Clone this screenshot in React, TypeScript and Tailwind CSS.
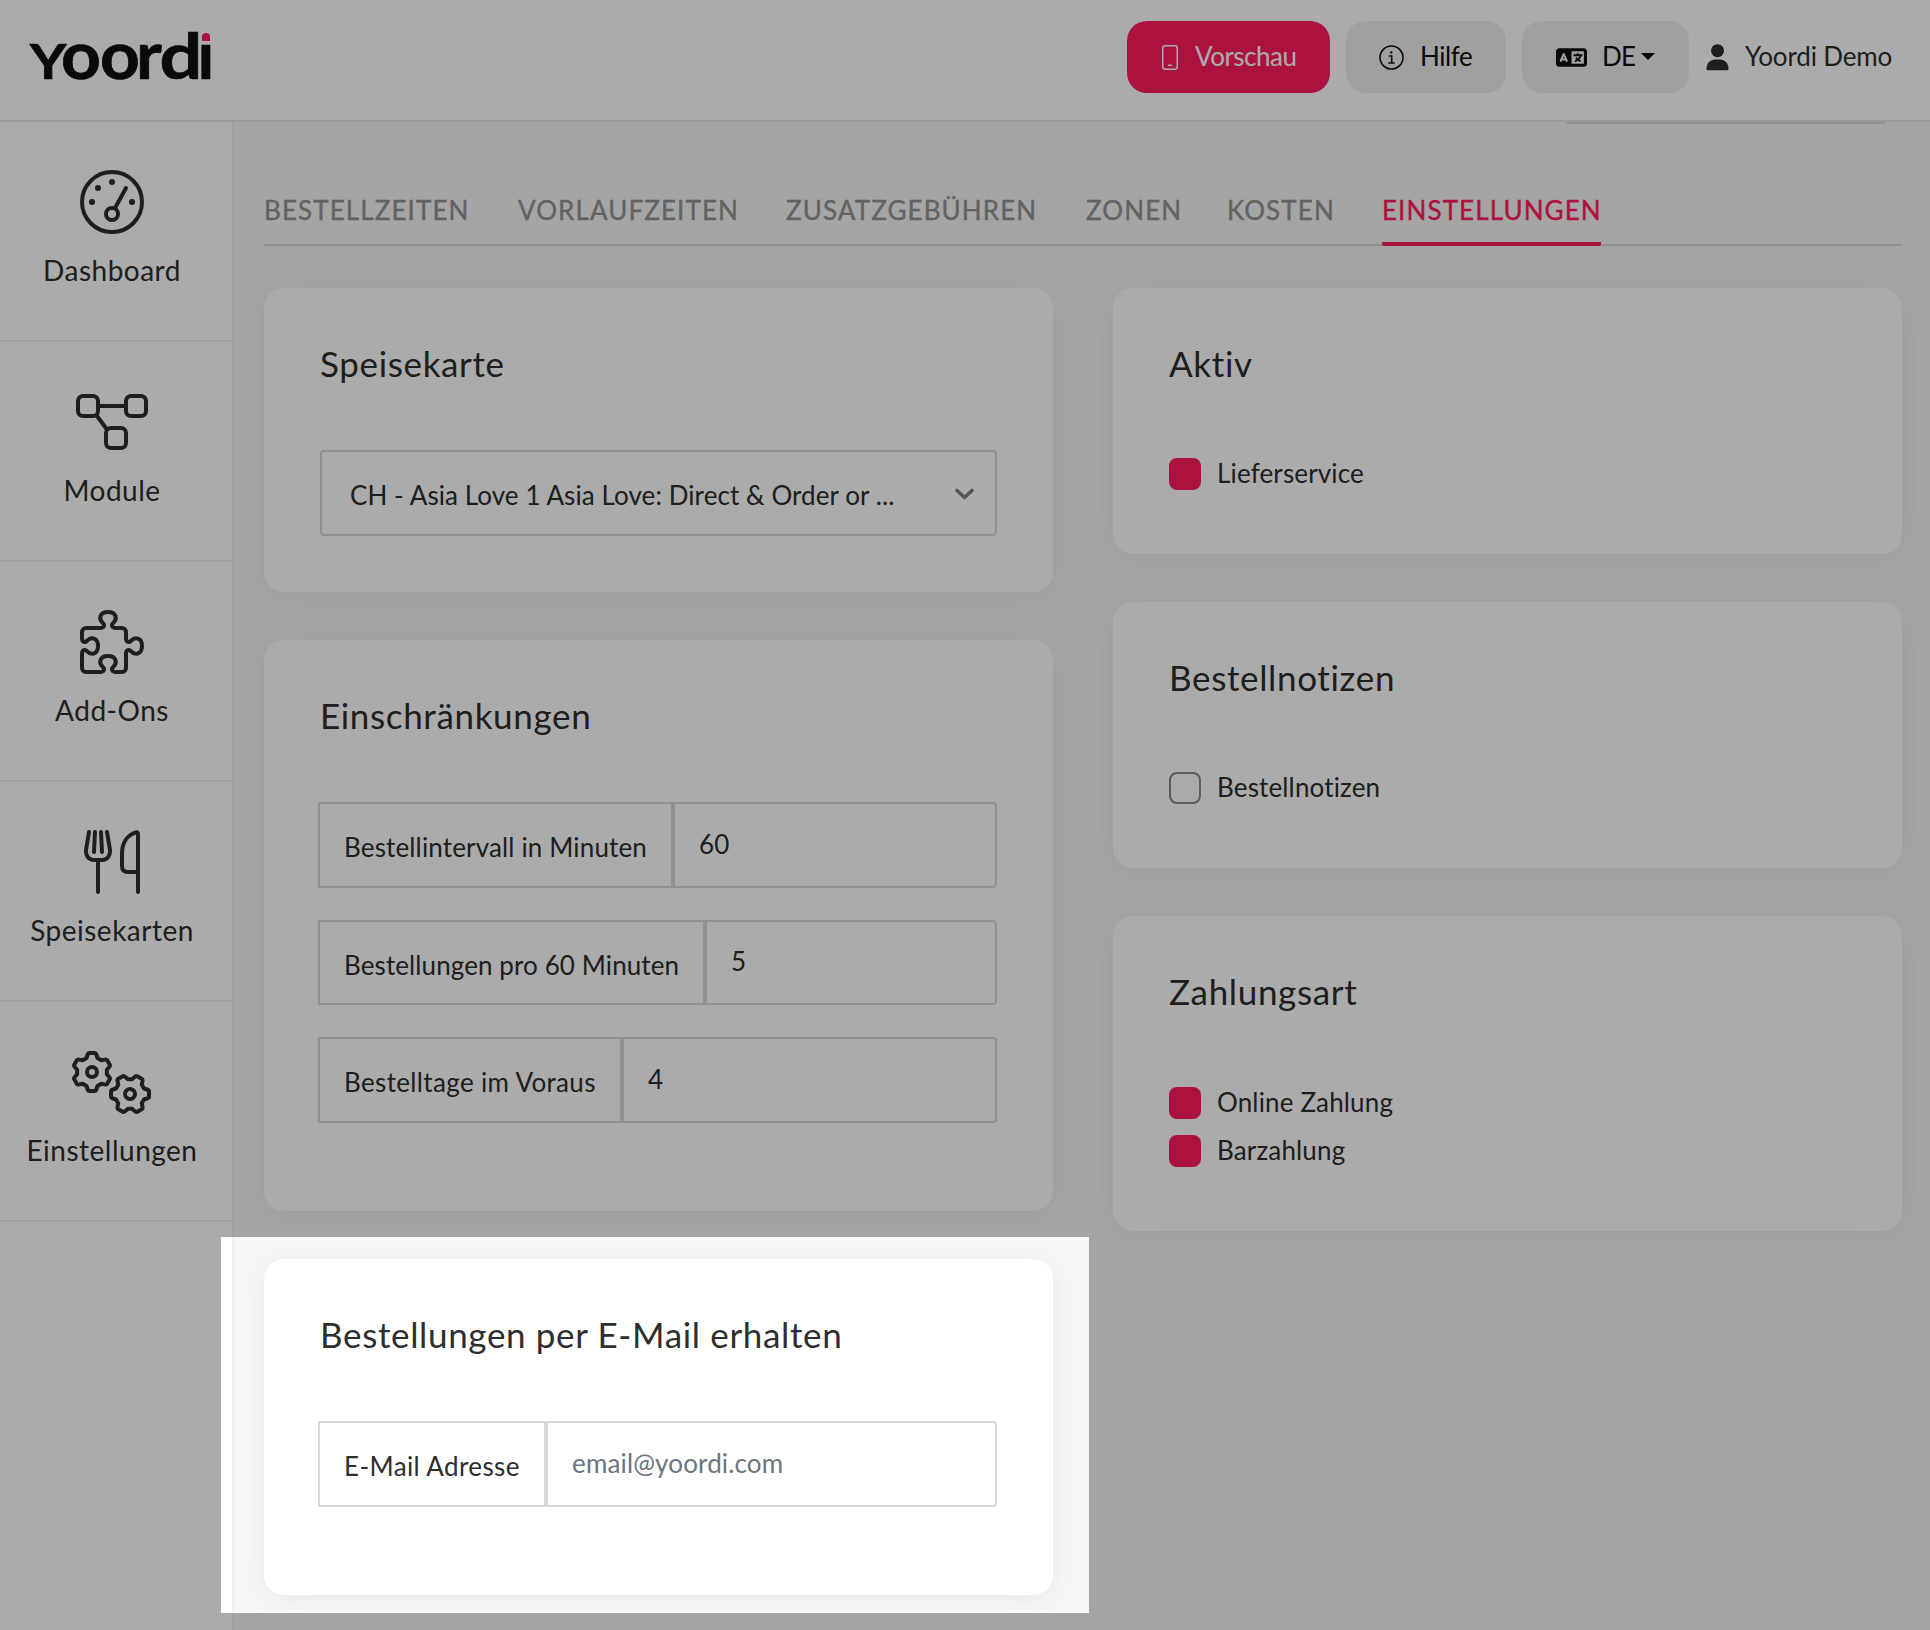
import React from 'react';
import { FaLanguage } from 'react-icons/fa6';

const iconProps = {
    fill: 'none',
    stroke: 'currentColor',
    strokeWidth: 4,
    strokeLinecap: 'round' as const,
    strokeLinejoin: 'round' as const,
};

const DashboardIcon = () => (
    <svg width="80" height="64" viewBox="0 0 80 64" {...iconProps}>
        <circle cx="40" cy="32" r="30" />
        <circle cx="40" cy="44" r="6" />
        <path d="M43 38 54 18" />
        <g fill="currentColor" stroke="none">
            <circle cx="20" cy="32" r="3" />
            <circle cx="26" cy="18" r="3" />
            <circle cx="40" cy="12" r="3" />
            <circle cx="60" cy="32" r="3" />
        </g>
    </svg>
);

const ModuleIcon = () => (
    <svg width="80" height="64" viewBox="0 0 80 64" {...iconProps}>
        <rect x="6" y="6" width="20" height="20" rx="5" />
        <rect x="54" y="6" width="20" height="20" rx="5" />
        <rect x="34" y="38" width="20" height="20" rx="5" />
        <path d="M26 16H54M25 26 35 39.500" />
    </svg>
);

const AddOnsIcon = () => (
    <svg width="64" height="64" viewBox="0 0 64 64" {...iconProps}>
        <path d="M6 18H20C24.500 18 25 14.800 22.600 12.800C18.500 9 19.500 2 28 2C36.500 2 37.500 9 33.400 12.800C31 14.800 31.500 18 36 18H42A4 4 0 0 1 46 22V28C46 32.500 49.200 33 51.200 30.600C55 26.500 62 27.500 62 36C62 44.500 55 45.500 51.200 41.400C49.200 39 46 39.500 46 44V58A4 4 0 0 1 42 62H36C31.500 62 31 58.800 33.400 56.800C37.500 53 36.500 46 28 46C19.500 46 18.500 53 22.600 56.800C25 58.800 24.500 62 20 62H6A4 4 0 0 1 2 58V44C2 39.500 5.200 39 7.200 41.400C11 45.500 18 44.500 18 36C18 27.500 11 26.500 7.200 30.600C5.200 33 2 32.500 2 28V22A4 4 0 0 1 6 18Z" />
    </svg>
);

const MenuIcon = () => (
    <svg width="64" height="64" viewBox="0 0 64 64" {...iconProps}>
        <path d="M9 2 6 20C5.500 26 9 30 14 30H22C27 30 30.500 26 30 20L27 2" />
        <path d="M15 2 14 22M21 2 22 22M18 30V62" />
        <path d="M58 62V4Q58 2 56 2.300C47 5 42 13 42 24V36Q42 42 48 42H58" />
    </svg>
);

// one tooth, repeated every 60 degrees
const gearPoint = (x: number, y: number, deg: number) => {
    const a = (deg * Math.PI) / 180;
    return `${(x * Math.cos(a) - y * Math.sin(a)).toFixed(2)} ${(x * Math.sin(a) + y * Math.cos(a)).toFixed(2)}`;
};

const gearPath = [0, 60, 120, 180, 240, 300]
    .map((deg, i) => {
        const p = (x: number, y: number) => gearPoint(x, y, deg);
        return `${i ? 'L' : 'M'}${p(-5.5, -14)}L${p(-4.5, -17)}Q${p(-4, -19)} ${p(-2.5, -19)}L${p(2.5, -19)}Q${p(4, -19)} ${p(4.5, -17)}L${p(5.5, -14)}`;
    })
    .join('') + 'Z';

const SettingsIcon = () => (
    <svg width="80" height="64" viewBox="0 0 80 64" {...iconProps}>
        <g transform="translate(20 22)">
            <path d={gearPath} />
            <circle r="5" />
        </g>
        <g transform="translate(58 44) rotate(30)">
            <path d={gearPath} />
            <circle r="5" />
        </g>
    </svg>
);

const PhoneIcon = () => (
    <svg width="16" height="25" viewBox="0 0 16 25" fill="none" stroke="currentColor" strokeWidth="1.5">
        <rect x="0.75" y="0.75" width="14.5" height="23.5" rx="2.5" />
        <path d="M6.500 20.250H9.500" strokeLinecap="round" />
    </svg>
);

const InfoIcon = () => (
    <svg width="25" height="25" viewBox="0 0 25 25" fill="none" stroke="currentColor" strokeWidth="1.6">
        <circle cx="12.5" cy="12.5" r="11.500" />
        <path d="M9.800 11H12.700V18M9.300 18H15.700" />
        <circle cx="12.3" cy="7.500" r="1.200" fill="currentColor" stroke="none" />
    </svg>
);

const UserIcon = () => (
    <svg width="23" height="27" viewBox="0 0 23 27" fill="currentColor">
        <circle cx="11.500" cy="6.700" r="6.500" />
        <path d="M0.500 25C0.500 19 4.500 15.500 9 15.500H14C18.500 15.500 22.500 19 22.500 25Q22.500 26.300 21.200 26.300H1.800Q0.500 26.300 0.500 25Z" />
    </svg>
);

const Logo = () => (
    <svg
        width="194"
        height="120"
        viewBox="20 0 194 120"
        role="img"
        aria-label="Yoordi"
        fill="#0f0f0f"
        stroke="#0f0f0f"
        strokeWidth="0.7"
        className="font-['Lato'] font-bold"
    >
        <text x="30" y="79" fontSize="47.5" textLength="36.500" lengthAdjust="spacingAndGlyphs">Y</text>
        <text x="61" y="79" fontSize="66" textLength="40" lengthAdjust="spacingAndGlyphs">o</text>
        <text x="100" y="79" fontSize="66" textLength="40" lengthAdjust="spacingAndGlyphs">o</text>
        <text x="136" y="79" fontSize="66" textLength="26" lengthAdjust="spacingAndGlyphs">r</text>
        <text x="159.5" y="79" fontSize="62.5" textLength="43" lengthAdjust="spacingAndGlyphs">d</text>
        <text x="197.5" y="79" fontSize="66" textLength="17" lengthAdjust="spacingAndGlyphs">ı</text>
        <path d="M202 41V37A4 4 0 0 1 210 37V41Z" fill="#ff1c5c" stroke="none" />
    </svg>
);

const navItems = [
    { label: 'Dashboard', icon: <DashboardIcon /> },
    { label: 'Module', icon: <ModuleIcon /> },
    { label: 'Add-Ons', icon: <AddOnsIcon /> },
    { label: 'Speisekarten', icon: <MenuIcon /> },
    { label: 'Einstellungen', icon: <SettingsIcon /> },
];

const tabs = [
    { label: 'Bestellzeiten', width: 'w-[206px]' },
    { label: 'Vorlaufzeiten', width: 'w-[220px]' },
    { label: 'Zusatzgebühren', width: 'w-[252px]' },
    { label: 'Zonen', width: 'w-[93px]' },
    { label: 'Kosten', width: 'w-[107px]' },
    { label: 'Einstellungen', width: 'w-[219px]', active: true },
];

type CardProps = {
    title: string;
    height: string;
    children: React.ReactNode;
};

const Card = ({ title, height, children }: CardProps) => (
    <section className={`rounded-[20px] bg-white px-14 pt-[51px] shadow-[0_4px_28px_rgba(0,0,0,0.06)] ${height}`}>
        <h2 className="h-[51px] whitespace-nowrap text-[35px] leading-[48px] tracking-[0.65px]">{title}</h2>
        {children}
    </section>
);

type FieldProps = {
    label: string;
    labelStyle: string;
    value?: string;
    placeholder?: string;
};

const Field = ({ label, labelStyle, value, placeholder }: FieldProps) => (
    <div className="-ml-0.5 flex h-[85.5px] w-[679px]">
        <label className={`shrink-0 whitespace-nowrap border-2 border-[#d8d8d8] pl-6 pt-[5px] leading-[76px] ${labelStyle}`}>
            {label}
        </label>
        <input
            type="text"
            defaultValue={value}
            placeholder={placeholder}
            className="min-w-0 flex-1 rounded-r-[4px] border-2 border-[#d8d8d8] pb-px pl-6 tracking-[0.15px] placeholder:text-[#6c757d]"
        />
    </div>
);

const Check = ({ label, checked }: { label: string; checked?: boolean }) => (
    <label className="flex h-8 items-center gap-4">
        <span className={`size-8 rounded-[8px] ${checked ? 'bg-[#ff1c5c]' : 'border-2 border-[#8a8a8a]'}`} />
        <span className="whitespace-nowrap pb-0.5">{label}</span>
    </label>
);

const Header = () => (
    <header className="flex h-[122px] items-start justify-between border-b-2 border-[#e6e6e6] bg-white pl-5">
        <Logo />
        <div className="mt-[21px] flex h-[72px] items-center">
            <button className="flex h-[72px] w-[203px] items-center rounded-[20px] bg-[#ff1c5c] pl-[35px] text-white">
                <PhoneIcon />
                <span className="ml-[17px] pb-0.5 tracking-[-0.5px]">Vorschau</span>
            </button>
            <button className="ml-4 flex h-[72px] w-40 items-center rounded-[20px] bg-[#efefef] pl-[33px] text-[#0f0f0f]">
                <InfoIcon />
                <span className="ml-4 pb-0.5 tracking-[-0.4px]">Hilfe</span>
            </button>
            <button className="ml-4 flex h-[72px] w-[167px] items-center rounded-[20px] bg-[#efefef] pl-[34px] text-[#0f0f0f]">
                <FaLanguage size={31} />
                <span className="ml-[15px] pb-0.5 tracking-[-0.8px]">DE</span>
                <svg width="14" height="7" viewBox="0 0 14 7" className="mb-0.5 ml-1.5">
                    <path d="M0 0H14L7 7Z" fill="currentColor" />
                </svg>
            </button>
            <div className="flex w-[241px] items-center pl-[17px]">
                <UserIcon />
                <span className="ml-4 whitespace-nowrap pb-0.5 tracking-[-0.15px]">Yoordi Demo</span>
            </div>
        </div>
    </header>
);

const Sidebar = () => (
    <aside className="w-[234px] shrink-0 border-r-2 border-[#f0f0f0] bg-white">
        {navItems.map((item) => (
            <a key={item.label} className="flex h-[220px] flex-col items-center border-b-2 border-[#f0f0f0] pr-2 pt-12">
                {item.icon}
                <span className="mt-4 text-[28px] leading-[40px] tracking-[0.5px]">{item.label}</span>
            </a>
        ))}
    </aside>
);

const Tabs = () => (
    <nav className="flex gap-12 border-b-2 border-[#d8d8d8] text-[26px] uppercase text-[#939393] [-webkit-text-stroke:0.4px]">
        {tabs.map((tab) => (
            <a
                key={tab.label}
                className={`-mb-0.5 h-[60px] whitespace-nowrap pt-1 leading-[40px] tracking-[1.1px] ${tab.width} ${tab.active ? 'rounded-b-[2px] border-b-4 border-[#ff1c5c] text-[#ff1c5c]' : ''}`}
            >
                {tab.label}
            </a>
        ))}
    </nav>
);

export default function App() {
    return (
        <div className="relative flex h-[1630px] w-[1930px] flex-col overflow-hidden bg-[#f7f7f7] font-['Lato',sans-serif] text-[26px] tracking-[0.15px] text-[#2e2e2e]">
            <Header />
            <div className="flex flex-1">
                <Sidebar />
                <main className="flex-1 pl-[30px] pr-7">
                    {/* bottom edge of the button scrolled under the header */}
                    <div className="ml-[1302px] h-0.5 w-80 rounded-b-[2px] bg-[#d8d8d8]" />
                    <div className="pt-[62px]">
                        <Tabs />
                    </div>
                    <div className="mt-[42px] flex justify-between">
                        <div className="flex w-[789px] flex-col gap-12">
                            <Card title="Speisekarte" height="h-[304px]">
                                <button className="mt-[60px] flex h-[86px] w-[677px] items-center justify-between rounded-[4px] border-2 border-[#d8d8d8] pl-7 pr-5">
                                    <span className="whitespace-nowrap pt-1 tracking-[0.08px]">CH - Asia Love 1 Asia Love: Direct &amp; Order or ...</span>
                                    <svg width="21" height="12" viewBox="0 0 21 12" fill="none" stroke="#808080" strokeWidth="3.6" strokeLinecap="round" strokeLinejoin="round" className="mt-0.5">
                                        <path d="M3 2.500 10.500 9.500 18 2.500" />
                                    </svg>
                                </button>
                            </Card>
                            <Card title="Einschränkungen" height="h-[571px]">
                                <div className="mt-[60px] flex flex-col gap-8">
                                    <Field label="Bestellintervall in Minuten" labelStyle="w-[355px]" value="60" />
                                    <Field label="Bestellungen pro 60 Minuten" labelStyle="w-[387px] tracking-[0.1px]" value="5" />
                                    <Field label="Bestelltage im Voraus" labelStyle="w-[304px] tracking-[0.35px]" value="4" />
                                </div>
                            </Card>
                            <Card title="Bestellungen per E-Mail erhalten" height="h-[336px]">
                                <div className="mt-[60px]">
                                    <Field label="E-Mail Adresse" labelStyle="w-[228px] tracking-[0.4px]" placeholder="email@yoordi.com" />
                                </div>
                            </Card>
                        </div>
                        <div className="flex w-[789px] flex-col gap-12">
                            <Card title="Aktiv" height="h-[266px]">
                                <div className="mt-[68px]">
                                    <Check label="Lieferservice" checked />
                                </div>
                            </Card>
                            <Card title="Bestellnotizen" height="h-[266px]">
                                <div className="mt-[68px]">
                                    <Check label="Bestellnotizen" />
                                </div>
                            </Card>
                            <Card title="Zahlungsart" height="h-[315px]">
                                <div className="mt-[69px] flex flex-col gap-4">
                                    <Check label="Online Zahlung" checked />
                                    <Check label="Barzahlung" checked />
                                </div>
                            </Card>
                        </div>
                    </div>
                </main>
            </div>
            {/* spotlight: everything outside of this box is dimmed */}
            <div className="pointer-events-none absolute left-[221px] top-[1237px] h-[376px] w-[868px] shadow-[0_0_0_2000px_rgba(0,0,0,0.33)]" />
        </div>
    );
}
